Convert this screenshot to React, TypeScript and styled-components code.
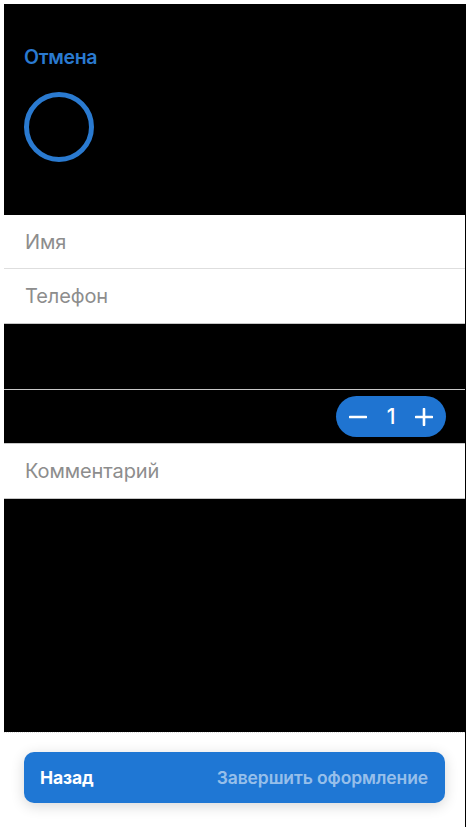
import React from "react";
import styled, { createGlobalStyle } from "styled-components";

const GlobalStyle = createGlobalStyle`
  html, body {
    margin: 0;
    padding: 0;
    background: #ffffff;
    font-family: Inter, "Noto Sans", Roboto, sans-serif;
  }
  * { box-sizing: border-box; }
`;

const Page = styled.div`
  padding: 4px 4px 0 4px;
  width: 470px;
  height: 827px;
  overflow: hidden;
`;

const Frame = styled.div`
  width: 462px;
  height: 823px;
  border-right: 1px solid #000;
  display: flex;
  flex-direction: column;
  background: #000;
`;

const Header = styled.div`
  height: 211px;
  flex: none;
  display: flex;
  flex-direction: column;
  align-items: flex-start;
  padding: 40px 0 0 20px;
  gap: 22px;
`;

const CancelLink = styled.span`
  color: #2a7ad0;
  font-size: 19.5px;
  line-height: 26px;
  font-weight: 600;
  letter-spacing: -0.3px;
`;

const Avatar = styled.div`
  width: 70px;
  height: 70px;
  border-radius: 50%;
  border: 5.5px solid #2a7ad0;
`;

const Field = styled.div<{ $line: string; $height: number }>`
  height: ${(p) => p.$height}px;
  flex: none;
  background: #fff;
  border-bottom: 1px solid ${(p) => p.$line};
  display: flex;
  align-items: center;
  padding-left: 21px;
  color: #8d8d8d;
  font-size: 20px;
  letter-spacing: -0.1px;
`;

const BlackGap = styled.div<{ $height: number; $line?: string }>`
  height: ${(p) => p.$height}px;
  flex: none;
  background: #000;
  border-bottom: ${(p) => (p.$line ? `1.5px solid ${p.$line}` : "none")};
`;

const StepperRow = styled.div`
  height: 54px;
  flex: none;
  background: #000;
  border-bottom: 1.5px solid #c8c8c8;
  display: flex;
  align-items: center;
  justify-content: flex-end;
  padding-right: 19px;
`;

const Stepper = styled.div`
  width: 110px;
  height: 41px;
  border-radius: 21px;
  background: #1f74d1;
  display: flex;
  align-items: center;
  justify-content: space-between;
  padding: 0 12px 0 12px;
  color: #fff;
`;

const StepBtn = styled.span`
  width: 20px;
  height: 20px;
  display: flex;
  align-items: center;
  justify-content: center;
`;

const Count = styled.span`
  font-size: 21px;
  font-weight: 500;
  color: #fff;
`;

const Filler = styled.div`
  flex: 1;
  background: #000;
`;

const Footer = styled.div`
  height: 95px;
  flex: none;
  background: #fff;
  border-top: 1.5px dotted #dcdcdc;
  padding: 19px 20px 0 20px;
`;

const ActionBar = styled.div`
  height: 51px;
  border-radius: 10px;
  background: #1f77d4;
  box-shadow: 0 3px 14px rgba(0, 0, 0, 0.16);
  display: flex;
  align-items: center;
  justify-content: space-between;
  padding: 0 17px 0 16px;
`;

const ActionText = styled.span<{ $muted?: boolean }>`
  font-size: 17.5px;
  font-weight: ${(p) => (p.$muted ? 600 : 700)};
  color: ${(p) => (p.$muted ? "rgba(255,255,255,0.55)" : "#fff")};
  letter-spacing: -0.1px;
`;

export default function App() {
  return (
    <>
      <GlobalStyle />
      <Page>
        <Frame>
          <Header>
            <CancelLink>Отмена</CancelLink>
            <Avatar />
          </Header>
          <Field $line="#dedede" $height={54}>Имя</Field>
          <Field $line="#c6c6c6" $height={55}>Телефон</Field>
          <BlackGap $height={66} $line="#c8c8c8" />
          <StepperRow>
            <Stepper>
              <StepBtn>
                <svg width="18" height="18" viewBox="0 0 18 18">
                  <path d="M1 9h16" stroke="#fff" strokeWidth="2.6" strokeLinecap="round" />
                </svg>
              </StepBtn>
              <Count>1</Count>
              <StepBtn>
                <svg width="18" height="18" viewBox="0 0 18 18">
                  <path d="M1 9h16M9 1v16" stroke="#fff" strokeWidth="2.6" strokeLinecap="round" />
                </svg>
              </StepBtn>
            </Stepper>
          </StepperRow>
          <Field $line="#c6c6c6" $height={55}>Комментарий</Field>
          <Filler />
          <Footer>
            <ActionBar>
              <ActionText>Назад</ActionText>
              <ActionText $muted>Завершить оформление</ActionText>
            </ActionBar>
          </Footer>
        </Frame>
      </Page>
    </>
  );
}
